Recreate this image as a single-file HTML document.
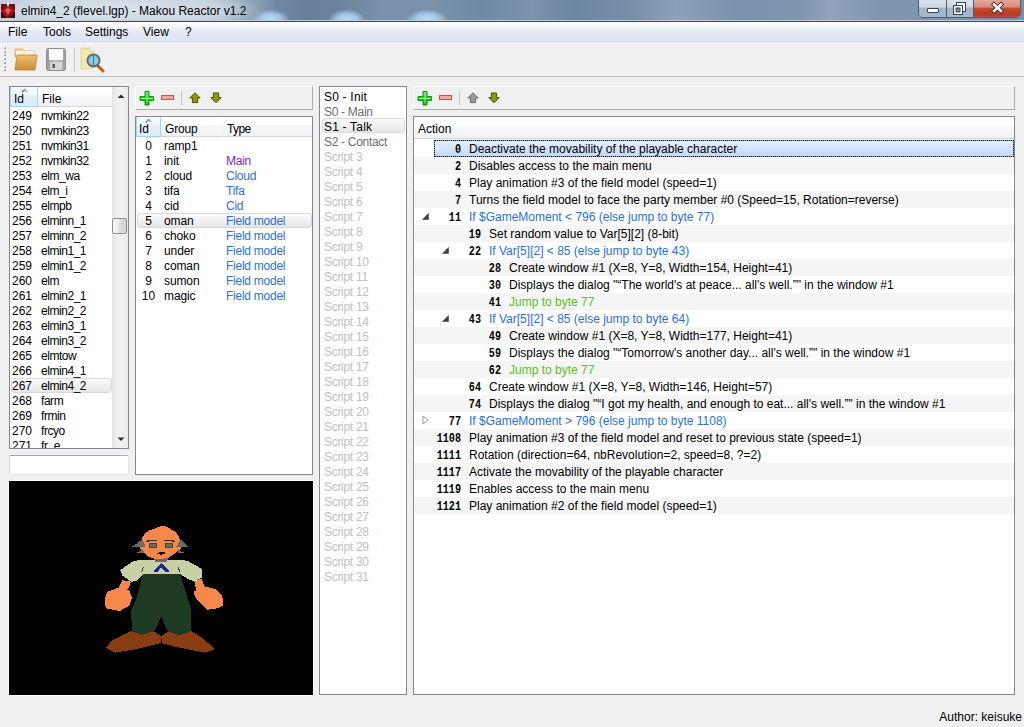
<!DOCTYPE html><html><head><meta charset="utf-8"><style>
*{margin:0;padding:0;box-sizing:border-box}
html,body{width:1024px;height:727px;overflow:hidden;background:#f0f0f0;font-family:"Liberation Sans",sans-serif;font-size:12px;color:#000}
body{position:relative}
.a{position:absolute}
.nw{white-space:nowrap}
#title{left:0;top:0;width:1024px;height:20px;background:linear-gradient(90deg,#c3cfdb 0%,#c6d2dd 10%,#bccad6 21%,#97abbf 24%,#7088a2 27%,#677f99 30%,#6a829c 33%,#7890a9 37%,#7a92ab 42%,#718aa4 47%,#7b93ab 52%,#6d86a0 56%,#7990a9 62%,#8ba1b7 66%,#7a92ab 72%,#7d95ad 78%,#8fa4b9 81%,#7f96ae 86%,#7890a9 100%)}
#titleline{left:0;top:20px;width:1024px;height:2px;border-top:1px solid #c6d0da;background:#3a4550}
#menu{left:0;top:22px;width:1024px;height:22px;background:linear-gradient(#ffffff 0%,#f3f5fa 25%,#e3e7f4 50%,#dde2f2 100%);border-bottom:1px solid #b6bccc}
#menuw{left:0;top:43px;width:1024px;height:1px;background:#fff}
#menu span{position:absolute;top:3px;line-height:14px}
.box{position:absolute;background:#fff;border:1px solid #828790}
.rbox{position:absolute;border-top:1px solid #fff;border-left:1px solid #fff;border-right:1px solid #ababab;border-bottom:1px solid #ababab;background:#f0f0f0}
.hdr{position:absolute;height:20px;background:linear-gradient(#ffffff 0%,#ffffff 42%,#f7f8fa 45%,#f1f2f4 100%);border-bottom:1px solid #d5d5d5}
.hcol{position:absolute;top:0;height:20px;line-height:20px;padding-top:1px}
.hsep{position:absolute;top:0;width:1px;height:20px;background:linear-gradient(#fff,#e3e8ee)}
.sorted{position:absolute;top:0;height:20px;background:linear-gradient(#f4f9fd 0%,#f2f8fc 42%,#e3eff7 45%,#deedf6 100%);border:1px solid #96d9f9;border-top:0}
.r{position:absolute;height:15px;line-height:15px;white-space:nowrap}
.tr{position:absolute;height:17px;line-height:17px;white-space:nowrap}
.num{position:absolute;font-family:"Liberation Mono",monospace;font-weight:bold;font-size:13px;text-align:right;transform:scaleX(0.78);transform-origin:right center}
.sel{position:absolute;border:1px solid #d9d9d9;border-radius:3px;background:linear-gradient(#fafafa,#e6e6e6)}
</style></head><body>
<div id="title" class="a"></div><div id="titleline" class="a"></div>
<svg class="a" style="left:0;top:0" width="1024" height="20"><defs><radialGradient id="blob"><stop offset="0" stop-color="#b8dcfb" stop-opacity="1"/><stop offset="0.55" stop-color="#b0d4f4" stop-opacity="0.8"/><stop offset="1" stop-color="#a8c8e8" stop-opacity="0"/></radialGradient><radialGradient id="glow"><stop offset="0" stop-color="#e4ebf1" stop-opacity="0.7"/><stop offset="0.7" stop-color="#dde5ec" stop-opacity="0.45"/><stop offset="1" stop-color="#d8e0e8" stop-opacity="0"/></radialGradient></defs><ellipse cx="125" cy="10" rx="140" ry="16" fill="url(#glow)"/><ellipse cx="271" cy="20" rx="19" ry="11" fill="url(#blob)"/><ellipse cx="347" cy="20" rx="19" ry="11" fill="url(#blob)"/><ellipse cx="427" cy="20" rx="21" ry="11" fill="url(#blob)"/></svg>
<svg class="a" style="left:0;top:3px" width="17" height="16" viewBox="0 0 17 16"><rect x="1" y="1" width="6.5" height="6.5" fill="#5a1a14"/><rect x="8.5" y="1" width="6.5" height="6.5" fill="#5a1a14"/><rect x="1" y="8.5" width="6.5" height="6.5" fill="#3a0c0a"/><rect x="8.5" y="8.5" width="6.5" height="6.5" fill="#3a0c0a"/><path d="M8 1 L15 8 L8 15.5 L1 8Z" fill="#b80c14"/><path d="M8 9 L13 8 L8 15Z" fill="#900a10"/><path d="M4.5 8 h7 M6 6.5 h4 M8 4.5 v7 M6.5 10 h3" stroke="#e8a090" stroke-width="1" opacity="0.8"/><rect x="7" y="0" width="2" height="3" fill="#f4f4f4"/></svg>
<div class="a nw" style="left:21px;top:4px;line-height:14px;font-size:12px;color:#000">elmin4_2 (flevel.lgp) - Makou Reactor v1.2</div>
<div class="a" style="left:918px;top:-3px;width:103px;height:21px;border:1px solid #4d5d6e;border-radius:0 0 5px 5px;overflow:hidden;"><div class="a" style="left:0;top:0;width:28px;height:20px;background:linear-gradient(#dfe7ef 0%,#ccd8e4 45%,#a2b4c7 50%,#a7b9cc 100%);border-right:1px solid #4d5d6e"></div><div class="a" style="left:28px;top:0;width:27px;height:20px;background:linear-gradient(#dfe7ef 0%,#ccd8e4 45%,#a2b4c7 50%,#a7b9cc 100%);border-right:1px solid #4d5d6e"></div><div class="a" style="left:55px;top:0;width:46px;height:20px;background:linear-gradient(#e8aea2 0%,#d98a7a 45%,#c44a30 52%,#b83a22 85%,#c85a3e 100%)"></div></div>
<div class="a" style="left:927px;top:8px;width:12px;height:5px;background:#fff;border:1px solid #3a4550;border-radius:1px"></div>
<svg class="a" style="left:952px;top:2px" width="15" height="13" viewBox="0 0 15 13"><rect x="4.5" y="0.5" width="9" height="9" fill="#fff" stroke="#3a4550"/><rect x="1.5" y="3.5" width="9" height="9" fill="#fff" stroke="#3a4550"/><rect x="4" y="6" width="4" height="4" fill="#8090a0" stroke="#3a4550" stroke-width="1"/></svg>
<svg class="a" style="left:990px;top:1px" width="15" height="13" viewBox="0 0 15 13"><path d="M4 3.5 L11 10 M11 3.5 L4 10" stroke="#3a2a2a" stroke-width="4.4" stroke-linecap="square"/><path d="M4 3.5 L11 10 M11 3.5 L4 10" stroke="#fff" stroke-width="2.6" stroke-linecap="square"/></svg>
<div id="menu" class="a"><span style="left:8px">File</span><span style="left:43px">Tools</span><span style="left:85px">Settings</span><span style="left:143px">View</span><span style="left:185px">?</span></div><div id="menuw" class="a"></div>
<div class="a" style="left:0;top:75px;width:1024px;height:3px;background:linear-gradient(#f5f5f5 0%,#f5f5f5 33%,#b8b8b8 33%,#b8b8b8 66%,#f5f5f5 66%)"></div>
<div class="a" style="left:4px;top:47px;width:2px;height:2px;background:linear-gradient(135deg,#fff 0%,#fff 40%,#a0a0a0 40%)"></div>
<div class="a" style="left:4px;top:51px;width:2px;height:2px;background:linear-gradient(135deg,#fff 0%,#fff 40%,#a0a0a0 40%)"></div>
<div class="a" style="left:4px;top:54px;width:2px;height:2px;background:linear-gradient(135deg,#fff 0%,#fff 40%,#a0a0a0 40%)"></div>
<div class="a" style="left:4px;top:58px;width:2px;height:2px;background:linear-gradient(135deg,#fff 0%,#fff 40%,#a0a0a0 40%)"></div>
<div class="a" style="left:4px;top:62px;width:2px;height:2px;background:linear-gradient(135deg,#fff 0%,#fff 40%,#a0a0a0 40%)"></div>
<div class="a" style="left:4px;top:66px;width:2px;height:2px;background:linear-gradient(135deg,#fff 0%,#fff 40%,#a0a0a0 40%)"></div>
<div class="a" style="left:4px;top:69px;width:2px;height:2px;background:linear-gradient(135deg,#fff 0%,#fff 40%,#a0a0a0 40%)"></div>
<svg class="a" style="left:13px;top:47px" width="26" height="25" viewBox="0 0 26 25"><defs><linearGradient id="fb" x1="0" y1="0" x2="0" y2="1"><stop offset="0" stop-color="#f6dba6"/><stop offset="1" stop-color="#e8b86a"/></linearGradient><linearGradient id="ff" x1="0" y1="0" x2="0" y2="1"><stop offset="0" stop-color="#efc070"/><stop offset="1" stop-color="#c98a34"/></linearGradient></defs><path d="M2 2 h8 l2 2 h9 v6 h-19z" fill="url(#fb)" stroke="#d6a460" stroke-width="0.8"/><path d="M3 4 h18 v6 h-18z" fill="#fbf3e2"/><path d="M4 8 h20 l-2 15 h-20 z" fill="url(#ff)" stroke="#c08030" stroke-width="0.8"/></svg>
<svg class="a" style="left:45px;top:47px" width="23" height="25" viewBox="0 0 23 25"><defs><linearGradient id="fl" x1="0" y1="0" x2="1" y2="0"><stop offset="0" stop-color="#9c9c9c"/><stop offset="0.5" stop-color="#bababa"/><stop offset="1" stop-color="#a4a4a4"/></linearGradient></defs><rect x="1.5" y="1.5" width="19" height="22" rx="2" fill="url(#fl)" stroke="#8c8c8c"/><rect x="4" y="2" width="14" height="11" fill="#fbfbfb"/><rect x="5" y="15" width="12" height="8" fill="#d6d6d6"/><rect x="7.5" y="17" width="2.5" height="4" fill="#5a5a5a"/></svg>
<div class="a" style="left:74px;top:48px;width:1px;height:24px;background:#c8c8c8"></div>
<svg class="a" style="left:80px;top:47px" width="26" height="26" viewBox="0 0 26 26"><path d="M1 1 h9 l3 3 v17 l-12 1z" fill="#f3e9b0" stroke="#d8cc90" stroke-width="0.8"/><path d="M10 1 v3 h3" fill="#fff" stroke="#c8c8c8" stroke-width="0.8"/><path d="M17 18 L23 24" stroke="#c06018" stroke-width="3" stroke-linecap="round"/><circle cx="13.5" cy="13.5" r="6" fill="#7fd0e8" stroke="#6a6a6a" stroke-width="2"/><path d="M13.5 8 v11" stroke="#3a7a98" stroke-width="1"/></svg>
<div class="box" style="left:9px;top:86px;width:120px;height:363px;overflow:hidden">
<div class="hdr" style="left:0;top:0;width:102px"></div>
<div class="sorted" style="left:0;top:0;width:28px"></div>
<svg class="a" style="left:11px;top:1px" width="8" height="5" viewBox="0 0 8 5"><defs><linearGradient id="sa" x1="0" y1="0" x2="1" y2="0"><stop offset="0" stop-color="#2f5f80"/><stop offset="1" stop-color="#a8d4ec"/></linearGradient></defs><path d="M0 4.6 L3.6 0.6 L7.4 4.6 L5.6 4.6 L3.6 2.4 L1.8 4.6Z" fill="url(#sa)"/></svg>
<div class="hsep" style="left:102px"></div>
<div class="a nw" style="left:4px;top:5px;line-height:14px">Id</div>
<div class="a nw" style="left:32px;top:5px;line-height:14px">File</div>
<div class="a" style="left:102px;top:0;width:17px;height:361px;background:linear-gradient(90deg,#e3e3e3,#f0f0f0 30%,#f0f0f0 70%,#e8e8e8)"></div>
<svg class="a" style="left:107px;top:7px" width="8" height="5" viewBox="0 0 8 5"><path d="M0.5 4 L4 0.5 L7.5 4z" fill="#2a2a2a"/></svg>
<svg class="a" style="left:107px;top:350px" width="8" height="5" viewBox="0 0 8 5"><path d="M0.5 0.5 L4 4 L7.5 0.5z" fill="#2a2a2a"/></svg>
<div class="a" style="left:102px;top:131px;width:15px;height:16px;border:1px solid #8e8f8f;border-radius:2px;background:linear-gradient(90deg,#f7f7f7 0%,#ececec 45%,#dcdcdf 50%,#d6d6da 100%)"></div>
<div class="r" style="left:2px;top:22px">249</div>
<div class="r" style="left:31px;top:22px;letter-spacing:-0.45px">nvmkin22</div>
<div class="r" style="left:2px;top:37px">250</div>
<div class="r" style="left:31px;top:37px;letter-spacing:-0.45px">nvmkin23</div>
<div class="r" style="left:2px;top:52px">251</div>
<div class="r" style="left:31px;top:52px;letter-spacing:-0.45px">nvmkin31</div>
<div class="r" style="left:2px;top:67px">252</div>
<div class="r" style="left:31px;top:67px;letter-spacing:-0.45px">nvmkin32</div>
<div class="r" style="left:2px;top:82px">253</div>
<div class="r" style="left:31px;top:82px;letter-spacing:-0.45px">elm_wa</div>
<div class="r" style="left:2px;top:97px">254</div>
<div class="r" style="left:31px;top:97px;letter-spacing:-0.45px">elm_i</div>
<div class="r" style="left:2px;top:112px">255</div>
<div class="r" style="left:31px;top:112px;letter-spacing:-0.45px">elmpb</div>
<div class="r" style="left:2px;top:127px">256</div>
<div class="r" style="left:31px;top:127px;letter-spacing:-0.45px">elminn_1</div>
<div class="r" style="left:2px;top:142px">257</div>
<div class="r" style="left:31px;top:142px;letter-spacing:-0.45px">elminn_2</div>
<div class="r" style="left:2px;top:157px">258</div>
<div class="r" style="left:31px;top:157px;letter-spacing:-0.45px">elmin1_1</div>
<div class="r" style="left:2px;top:172px">259</div>
<div class="r" style="left:31px;top:172px;letter-spacing:-0.45px">elmin1_2</div>
<div class="r" style="left:2px;top:187px">260</div>
<div class="r" style="left:31px;top:187px;letter-spacing:-0.45px">elm</div>
<div class="r" style="left:2px;top:202px">261</div>
<div class="r" style="left:31px;top:202px;letter-spacing:-0.45px">elmin2_1</div>
<div class="r" style="left:2px;top:217px">262</div>
<div class="r" style="left:31px;top:217px;letter-spacing:-0.45px">elmin2_2</div>
<div class="r" style="left:2px;top:232px">263</div>
<div class="r" style="left:31px;top:232px;letter-spacing:-0.45px">elmin3_1</div>
<div class="r" style="left:2px;top:247px">264</div>
<div class="r" style="left:31px;top:247px;letter-spacing:-0.45px">elmin3_2</div>
<div class="r" style="left:2px;top:262px">265</div>
<div class="r" style="left:31px;top:262px;letter-spacing:-0.45px">elmtow</div>
<div class="r" style="left:2px;top:277px">266</div>
<div class="r" style="left:31px;top:277px;letter-spacing:-0.45px">elmin4_1</div>
<div class="sel" style="left:1px;top:291px;width:101px;height:15px"></div>
<div class="r" style="left:2px;top:292px">267</div>
<div class="r" style="left:31px;top:292px;letter-spacing:-0.45px">elmin4_2</div>
<div class="r" style="left:2px;top:307px">268</div>
<div class="r" style="left:31px;top:307px;letter-spacing:-0.45px">farm</div>
<div class="r" style="left:2px;top:322px">269</div>
<div class="r" style="left:31px;top:322px;letter-spacing:-0.45px">frmin</div>
<div class="r" style="left:2px;top:337px">270</div>
<div class="r" style="left:31px;top:337px;letter-spacing:-0.45px">frcyo</div>
<div class="r" style="left:2px;top:352px">271</div>
<div class="r" style="left:31px;top:352px;letter-spacing:-0.45px">fr_e</div>
</div>
<div class="a" style="left:9px;top:455px;width:120px;height:20px;background:#fff;border:1px solid #e0e4ea;border-left-color:#dbdfe6;border-top-color:#abadb3;border-radius:2px"></div>
<div class="a" style="left:8px;top:480px;width:306px;height:216px;background:#fff"></div>
<div class="a" style="left:9px;top:481px;width:304px;height:214px;background:#000;overflow:hidden">
<svg class="a" style="left:0;top:0" width="304" height="214" viewBox="9 481 304 214" shape-rendering="crispEdges"><path d="M105.9 647.9 L111.4 641 L131.9 630.8 L155.2 632.1 L161.3 636.2 L160.6 643.1 L136 649.2 L115.5 652.6Z" fill="#8a3c12"/><path d="M161.3 636.2 L168.8 631.4 L190.7 630.8 L203 638.3 L214.6 649.2 L204.4 652.6 L177 647.2 L162 643.1Z" fill="#8a3c12"/><path d="M142.2 574 L179.8 574 L183.9 586.4 L191.4 610.3 L190.7 631.4 L179.8 635.3 L167.5 631.4 L161.3 616.4 L154.5 631.4 L141.5 634.9 L131.9 631.4 L131.2 610.3 L136 600 L140.1 585Z" fill="#1f3a22"/><path d="M122.3 580.3 L131.2 581.7 L128.5 588.5 L118.2 588.5Z" fill="#f5884a"/><path d="M107.3 591.9 L118.2 587.8 L129.2 589.9 L131.9 597.4 L129.2 605.6 L119.6 611.1 L105.9 608.3 L104.6 600.1Z" fill="#f5884a"/><path d="M194.8 580.3 L201.6 578.9 L204.4 586.4 L196 592Z" fill="#f5884a"/><path d="M193.4 591.9 L204.4 586.4 L215.3 589.2 L222.2 596 L223.5 605.6 L215.3 609 L207.1 609.7 L196.2 598.8Z" fill="#f5884a"/><path d="M120.3 570 L133.3 561.2 L142.9 559.5 L179.8 559.5 L188 561.2 L201.6 568.7 L201.6 577.6 L194.8 581.7 L189.3 579.6 L180 574 L143 574 L136 581 L131.2 581.7 L122.3 575.5Z" fill="#c8d1a6"/><path d="M143.5 567 L141.5 572 M178 567 L180 572" stroke="#2a4a28" stroke-width="1"/><path d="M161.3 563.2 L153.1 571.4 L157.2 572.1 L161.3 567.3 L165.4 572.1 L169.5 571.4Z" fill="#1a2a8a"/><path d="M153.2 556 L160.8 559 L160.8 562.5 L155 561.5Z" fill="#6e6868"/><path d="M169 556 L160.8 559 L160.8 562.5 L167 561.5Z" fill="#6e6868"/><path d="M160.8 526.2 L155.3 528.3 L149.8 530.3 L145 533 L142.2 537.9 L141.5 542 L140.1 548.9 L144.3 552.3 L148.4 556.5 L153.9 558.5 L160.8 559.2 L169 557.5 L174.5 553.7 L178.6 550.3 L181.7 548.2 L180 542 L179.3 537.2 L175.9 532.4 L169.7 528.3 L164.9 526.2Z" fill="#f5884a"/><path d="M132.5 546.5 L142.2 539.5 L145.5 546.5Z" fill="#6e6868"/><path d="M136.5 553 L143 549.2 L144 553Z" fill="#6e6868"/><path d="M176.5 546.5 L180.5 539.5 L188.5 546.5Z" fill="#6e6868"/><path d="M177.5 550 L185.5 553 L178.5 553Z" fill="#6e6868"/><path d="M145.6 541.5 L148 540 L157.3 539.8 L157.3 541 L148 541.6Z" fill="#203040"/><path d="M164.2 539.8 L173 540 L175.9 542 L173 541.6 L164.2 541Z" fill="#203040"/><rect x="149.1" y="543.4" width="7.9" height="4.1" fill="#3a4a3a"/><rect x="150" y="544.3" width="6" height="2.3" fill="#62705c"/><rect x="165.2" y="543.4" width="7.3" height="4.1" fill="#3a4a3a"/><rect x="166" y="544.3" width="5.5" height="2.3" fill="#62705c"/><path d="M157 553 L160 552.3 L165 552.5 L164.9 554 L161 554.7 L157.5 554Z" fill="#1a1010"/></svg>
</div>
<div class="rbox" style="left:135px;top:86px;width:178px;height:24px"></div>
<svg class="a" style="left:139px;top:90px" width="16" height="16" viewBox="0 0 16 16"><defs><linearGradient id="pg139" x1="0" y1="0" x2="0" y2="1"><stop offset="0" stop-color="#5fe85a"/><stop offset="0.5" stop-color="#20cc20"/><stop offset="1" stop-color="#08a008"/></linearGradient></defs><path d="M6 1.5 h4 v5 h4.5 v4 h-4.5 v4.5 h-4 v-4.5 h-5 v-4 h5z" fill="url(#pg139)" stroke="#0a9a0a" stroke-width="1"/><path d="M8 2.5 v11 M2 8.5 h12" stroke="#c8f8c0" stroke-width="1" opacity="0.75"/></svg><svg class="a" style="left:161px;top:95px" width="13" height="5" viewBox="0 0 13 5"><rect x="0.5" y="0.5" width="12" height="4" fill="#f4a8a8" stroke="#d44c4c" stroke-width="1"/></svg><div class="a" style="left:181px;top:91px;width:1px;height:14px;background:#c8c8c8"></div><svg class="a" style="left:189px;top:92px" width="13" height="12" viewBox="0 0 13 12"><path d="M6 0.8 L11.2 6 L8.6 6 L8.6 10.6 L3.4 10.6 L3.4 6 L0.8 6Z" fill="#8c9410" stroke="#4a5000" stroke-width="1" stroke-linejoin="round"/></svg><svg class="a" style="left:210px;top:92px" width="13" height="12" viewBox="0 0 13 12"><path d="M3.4 1 L8.6 1 L8.6 5.6 L11.2 5.6 L6 10.8 L0.8 5.6 L3.4 5.6Z" fill="#8c9a10" stroke="#4a5000" stroke-width="1" stroke-linejoin="round"/></svg>
<div class="box" style="left:135px;top:116px;width:178px;height:359px;overflow:hidden">
<div class="hdr" style="left:0;top:0;width:176px"></div>
<div class="sorted" style="left:0;top:0;width:25px"></div>
<svg class="a" style="left:9px;top:1px" width="8" height="5" viewBox="0 0 8 5"><path d="M0 4.6 L3.6 0.6 L7.4 4.6 L5.6 4.6 L3.6 2.4 L1.8 4.6Z" fill="url(#sa)"/></svg>
<div class="hsep" style="left:86px"></div>
<div class="a nw" style="left:3px;top:5px;line-height:14px">Id</div>
<div class="a nw" style="left:29px;top:5px;line-height:14px;letter-spacing:-0.2px">Group</div>
<div class="a nw" style="left:91px;top:5px;line-height:14px;letter-spacing:-0.6px">Type</div>
<div class="r" style="left:0;top:22px;width:25px;text-align:center">0</div>
<div class="r" style="left:28px;top:22px;letter-spacing:-0.1px">ramp1</div>
<div class="r" style="left:90px;top:22px;color:#2f6fd0;letter-spacing:-0.25px"></div>
<div class="r" style="left:0;top:37px;width:25px;text-align:center">1</div>
<div class="r" style="left:28px;top:37px;letter-spacing:-0.1px">init</div>
<div class="r" style="left:90px;top:37px;color:#7c1fd0;letter-spacing:-0.25px">Main</div>
<div class="r" style="left:0;top:52px;width:25px;text-align:center">2</div>
<div class="r" style="left:28px;top:52px;letter-spacing:-0.1px">cloud</div>
<div class="r" style="left:90px;top:52px;color:#2f6fd0;letter-spacing:-0.25px">Cloud</div>
<div class="r" style="left:0;top:67px;width:25px;text-align:center">3</div>
<div class="r" style="left:28px;top:67px;letter-spacing:-0.1px">tifa</div>
<div class="r" style="left:90px;top:67px;color:#2f6fd0;letter-spacing:-0.25px">Tifa</div>
<div class="r" style="left:0;top:82px;width:25px;text-align:center">4</div>
<div class="r" style="left:28px;top:82px;letter-spacing:-0.1px">cid</div>
<div class="r" style="left:90px;top:82px;color:#2f6fd0;letter-spacing:-0.25px">Cid</div>
<div class="sel" style="left:1px;top:96px;width:175px;height:15px"></div>
<div class="r" style="left:0;top:97px;width:25px;text-align:center">5</div>
<div class="r" style="left:28px;top:97px;letter-spacing:-0.1px">oman</div>
<div class="r" style="left:90px;top:97px;color:#2f6fd0;letter-spacing:-0.25px">Field model</div>
<div class="r" style="left:0;top:112px;width:25px;text-align:center">6</div>
<div class="r" style="left:28px;top:112px;letter-spacing:-0.1px">choko</div>
<div class="r" style="left:90px;top:112px;color:#2f6fd0;letter-spacing:-0.25px">Field model</div>
<div class="r" style="left:0;top:127px;width:25px;text-align:center">7</div>
<div class="r" style="left:28px;top:127px;letter-spacing:-0.1px">under</div>
<div class="r" style="left:90px;top:127px;color:#2f6fd0;letter-spacing:-0.25px">Field model</div>
<div class="r" style="left:0;top:142px;width:25px;text-align:center">8</div>
<div class="r" style="left:28px;top:142px;letter-spacing:-0.1px">coman</div>
<div class="r" style="left:90px;top:142px;color:#2f6fd0;letter-spacing:-0.25px">Field model</div>
<div class="r" style="left:0;top:157px;width:25px;text-align:center">9</div>
<div class="r" style="left:28px;top:157px;letter-spacing:-0.1px">sumon</div>
<div class="r" style="left:90px;top:157px;color:#2f6fd0;letter-spacing:-0.25px">Field model</div>
<div class="r" style="left:0;top:172px;width:25px;text-align:center">10</div>
<div class="r" style="left:28px;top:172px;letter-spacing:-0.1px">magic</div>
<div class="r" style="left:90px;top:172px;color:#2f6fd0;letter-spacing:-0.25px">Field model</div>
</div>
<div class="box" style="left:319px;top:86px;width:88px;height:609px;overflow:hidden">
<div class="r" style="left:4px;top:3px;color:#000;letter-spacing:0.2px">S0 - Init</div>
<div class="r" style="left:4px;top:18px;color:#6d6d6d;letter-spacing:-0.3px">S0 - Main</div>
<div class="sel" style="left:2px;top:31px;width:83px;height:15px"></div>
<div class="r" style="left:4px;top:33px;color:#000;letter-spacing:0.2px">S1 - Talk</div>
<div class="r" style="left:4px;top:48px;color:#6d6d6d;letter-spacing:-0.3px">S2 - Contact</div>
<div class="r" style="left:4px;top:63px;color:#c0c0c0;letter-spacing:-0.3px">Script 3</div>
<div class="r" style="left:4px;top:78px;color:#c0c0c0;letter-spacing:-0.3px">Script 4</div>
<div class="r" style="left:4px;top:93px;color:#c0c0c0;letter-spacing:-0.3px">Script 5</div>
<div class="r" style="left:4px;top:108px;color:#c0c0c0;letter-spacing:-0.3px">Script 6</div>
<div class="r" style="left:4px;top:123px;color:#c0c0c0;letter-spacing:-0.3px">Script 7</div>
<div class="r" style="left:4px;top:138px;color:#c0c0c0;letter-spacing:-0.3px">Script 8</div>
<div class="r" style="left:4px;top:153px;color:#c0c0c0;letter-spacing:-0.3px">Script 9</div>
<div class="r" style="left:4px;top:168px;color:#c0c0c0;letter-spacing:-0.3px">Script 10</div>
<div class="r" style="left:4px;top:183px;color:#c0c0c0;letter-spacing:-0.3px">Script 11</div>
<div class="r" style="left:4px;top:198px;color:#c0c0c0;letter-spacing:-0.3px">Script 12</div>
<div class="r" style="left:4px;top:213px;color:#c0c0c0;letter-spacing:-0.3px">Script 13</div>
<div class="r" style="left:4px;top:228px;color:#c0c0c0;letter-spacing:-0.3px">Script 14</div>
<div class="r" style="left:4px;top:243px;color:#c0c0c0;letter-spacing:-0.3px">Script 15</div>
<div class="r" style="left:4px;top:258px;color:#c0c0c0;letter-spacing:-0.3px">Script 16</div>
<div class="r" style="left:4px;top:273px;color:#c0c0c0;letter-spacing:-0.3px">Script 17</div>
<div class="r" style="left:4px;top:288px;color:#c0c0c0;letter-spacing:-0.3px">Script 18</div>
<div class="r" style="left:4px;top:303px;color:#c0c0c0;letter-spacing:-0.3px">Script 19</div>
<div class="r" style="left:4px;top:318px;color:#c0c0c0;letter-spacing:-0.3px">Script 20</div>
<div class="r" style="left:4px;top:333px;color:#c0c0c0;letter-spacing:-0.3px">Script 21</div>
<div class="r" style="left:4px;top:348px;color:#c0c0c0;letter-spacing:-0.3px">Script 22</div>
<div class="r" style="left:4px;top:363px;color:#c0c0c0;letter-spacing:-0.3px">Script 23</div>
<div class="r" style="left:4px;top:378px;color:#c0c0c0;letter-spacing:-0.3px">Script 24</div>
<div class="r" style="left:4px;top:393px;color:#c0c0c0;letter-spacing:-0.3px">Script 25</div>
<div class="r" style="left:4px;top:408px;color:#c0c0c0;letter-spacing:-0.3px">Script 26</div>
<div class="r" style="left:4px;top:423px;color:#c0c0c0;letter-spacing:-0.3px">Script 27</div>
<div class="r" style="left:4px;top:438px;color:#c0c0c0;letter-spacing:-0.3px">Script 28</div>
<div class="r" style="left:4px;top:453px;color:#c0c0c0;letter-spacing:-0.3px">Script 29</div>
<div class="r" style="left:4px;top:468px;color:#c0c0c0;letter-spacing:-0.3px">Script 30</div>
<div class="r" style="left:4px;top:483px;color:#c0c0c0;letter-spacing:-0.3px">Script 31</div>
</div>
<div class="rbox" style="left:413px;top:86px;width:602px;height:24px"></div>
<svg class="a" style="left:417px;top:90px" width="16" height="16" viewBox="0 0 16 16"><defs><linearGradient id="pg417" x1="0" y1="0" x2="0" y2="1"><stop offset="0" stop-color="#5fe85a"/><stop offset="0.5" stop-color="#20cc20"/><stop offset="1" stop-color="#08a008"/></linearGradient></defs><path d="M6 1.5 h4 v5 h4.5 v4 h-4.5 v4.5 h-4 v-4.5 h-5 v-4 h5z" fill="url(#pg417)" stroke="#0a9a0a" stroke-width="1"/><path d="M8 2.5 v11 M2 8.5 h12" stroke="#c8f8c0" stroke-width="1" opacity="0.75"/></svg><svg class="a" style="left:439px;top:95px" width="13" height="5" viewBox="0 0 13 5"><rect x="0.5" y="0.5" width="12" height="4" fill="#f4a8a8" stroke="#d44c4c" stroke-width="1"/></svg><div class="a" style="left:459px;top:91px;width:1px;height:14px;background:#c8c8c8"></div><svg class="a" style="left:467px;top:92px" width="13" height="12" viewBox="0 0 13 12"><path d="M6 0.8 L11.2 6 L8.6 6 L8.6 10.6 L3.4 10.6 L3.4 6 L0.8 6Z" fill="#9a9a9a" stroke="#6a6a6a" stroke-width="1" stroke-linejoin="round"/></svg><svg class="a" style="left:488px;top:92px" width="13" height="12" viewBox="0 0 13 12"><path d="M3.4 1 L8.6 1 L8.6 5.6 L11.2 5.6 L6 10.8 L0.8 5.6 L3.4 5.6Z" fill="#8c9a10" stroke="#4a5000" stroke-width="1" stroke-linejoin="round"/></svg>
<div class="box" style="left:413px;top:116px;width:602px;height:579px;overflow:hidden">
<div class="hdr" style="left:0;top:0;width:600px;height:22px"></div>
<div class="a nw" style="left:4px;top:5px;line-height:14px">Action</div>
<div class="a" style="left:20px;top:23px;width:580px;height:17px;border:1px solid #7da2ce;border-radius:2px;background:linear-gradient(#e4eefd,#c4dafc)"></div>
<div class="a" style="left:20px;top:23px;width:580px;height:17px;border:1px dotted #000"></div>
<div class="tr num" style="left:7px;top:24px;width:40px;color:#000">0</div>
<div class="tr" style="left:55px;top:24px;color:#000;letter-spacing:0px">Deactivate the movability of the playable character</div>
<div class="a" style="left:0;top:40px;width:600px;height:17px;background:#f5f5f5"></div>
<div class="tr num" style="left:7px;top:41px;width:40px;color:#000">2</div>
<div class="tr" style="left:55px;top:41px;color:#000;letter-spacing:0px">Disables access to the main menu</div>
<div class="tr num" style="left:7px;top:58px;width:40px;color:#000">4</div>
<div class="tr" style="left:55px;top:58px;color:#000;letter-spacing:0px">Play animation #3 of the field model (speed=1)</div>
<div class="a" style="left:0;top:74px;width:600px;height:17px;background:#f5f5f5"></div>
<div class="tr num" style="left:7px;top:75px;width:40px;color:#000">7</div>
<div class="tr" style="left:55px;top:75px;color:#000;letter-spacing:0px">Turns the field model to face the party member #0 (Speed=15, Rotation=reverse)</div>
<svg class="a" style="left:8px;top:96px" width="7" height="7" viewBox="0 0 7 7"><path d="M6.5 0.5 L6.5 6.5 L0.5 6.5Z" fill="#404040" stroke="#5a5a5a" stroke-width="0.8"/></svg>
<div class="tr num" style="left:7px;top:92px;width:40px;color:#000">11</div>
<div class="tr" style="left:55px;top:92px;color:#2b6fd4;letter-spacing:0px">If $GameMoment &lt; 796 (else jump to byte 77)</div>
<div class="a" style="left:0;top:108px;width:600px;height:17px;background:#f5f5f5"></div>
<div class="tr num" style="left:27px;top:109px;width:40px;color:#000">19</div>
<div class="tr" style="left:75px;top:109px;color:#000;letter-spacing:0px">Set random value to Var[5][2] (8-bit)</div>
<svg class="a" style="left:28px;top:130px" width="7" height="7" viewBox="0 0 7 7"><path d="M6.5 0.5 L6.5 6.5 L0.5 6.5Z" fill="#404040" stroke="#5a5a5a" stroke-width="0.8"/></svg>
<div class="tr num" style="left:27px;top:126px;width:40px;color:#000">22</div>
<div class="tr" style="left:75px;top:126px;color:#2b6fd4;letter-spacing:0px">If Var[5][2] &lt; 85 (else jump to byte 43)</div>
<div class="a" style="left:0;top:142px;width:600px;height:17px;background:#f5f5f5"></div>
<div class="tr num" style="left:47px;top:143px;width:40px;color:#000">28</div>
<div class="tr" style="left:95px;top:143px;color:#000;letter-spacing:0px">Create window #1 (X=8, Y=8, Width=154, Height=41)</div>
<div class="tr num" style="left:47px;top:160px;width:40px;color:#000">30</div>
<div class="tr" style="left:95px;top:160px;color:#000;letter-spacing:0px">Displays the dialog &quot;“The world&#x27;s at peace... all&#x27;s well.”&quot; in the window #1</div>
<div class="a" style="left:0;top:176px;width:600px;height:17px;background:#f5f5f5"></div>
<div class="tr num" style="left:47px;top:177px;width:40px;color:#000">41</div>
<div class="tr" style="left:95px;top:177px;color:#5cbf1c;letter-spacing:0px">Jump to byte 77</div>
<svg class="a" style="left:28px;top:198px" width="7" height="7" viewBox="0 0 7 7"><path d="M6.5 0.5 L6.5 6.5 L0.5 6.5Z" fill="#404040" stroke="#5a5a5a" stroke-width="0.8"/></svg>
<div class="tr num" style="left:27px;top:194px;width:40px;color:#000">43</div>
<div class="tr" style="left:75px;top:194px;color:#2b6fd4;letter-spacing:0px">If Var[5][2] &lt; 85 (else jump to byte 64)</div>
<div class="a" style="left:0;top:210px;width:600px;height:17px;background:#f5f5f5"></div>
<div class="tr num" style="left:47px;top:211px;width:40px;color:#000">49</div>
<div class="tr" style="left:95px;top:211px;color:#000;letter-spacing:0px">Create window #1 (X=8, Y=8, Width=177, Height=41)</div>
<div class="tr num" style="left:47px;top:228px;width:40px;color:#000">59</div>
<div class="tr" style="left:95px;top:228px;color:#000;letter-spacing:0px">Displays the dialog &quot;“Tomorrow&#x27;s another day... all&#x27;s well.”&quot; in the window #1</div>
<div class="a" style="left:0;top:244px;width:600px;height:17px;background:#f5f5f5"></div>
<div class="tr num" style="left:47px;top:245px;width:40px;color:#000">62</div>
<div class="tr" style="left:95px;top:245px;color:#5cbf1c;letter-spacing:0px">Jump to byte 77</div>
<div class="tr num" style="left:27px;top:262px;width:40px;color:#000">64</div>
<div class="tr" style="left:75px;top:262px;color:#000;letter-spacing:0px">Create window #1 (X=8, Y=8, Width=146, Height=57)</div>
<div class="a" style="left:0;top:278px;width:600px;height:17px;background:#f5f5f5"></div>
<div class="tr num" style="left:27px;top:279px;width:40px;color:#000">74</div>
<div class="tr" style="left:75px;top:279px;color:#000;letter-spacing:0px">Displays the dialog &quot;“I got my health, and enough to eat... all&#x27;s well.”&quot; in the window #1</div>
<svg class="a" style="left:8px;top:298px" width="7" height="10" viewBox="0 0 7 10"><path d="M1 1 L6 5 L1 9Z" fill="none" stroke="#9a9a9a" stroke-width="1"/></svg>
<div class="tr num" style="left:7px;top:296px;width:40px;color:#000">77</div>
<div class="tr" style="left:55px;top:296px;color:#2b6fd4;letter-spacing:0px">If $GameMoment &gt; 796 (else jump to byte 1108)</div>
<div class="a" style="left:0;top:312px;width:600px;height:17px;background:#f5f5f5"></div>
<div class="tr num" style="left:7px;top:313px;width:40px;color:#000">1108</div>
<div class="tr" style="left:55px;top:313px;color:#000;letter-spacing:0px">Play animation #3 of the field model and reset to previous state (speed=1)</div>
<div class="tr num" style="left:7px;top:330px;width:40px;color:#000">1111</div>
<div class="tr" style="left:55px;top:330px;color:#000;letter-spacing:0px">Rotation (direction=64, nbRevolution=2, speed=8, ?=2)</div>
<div class="a" style="left:0;top:346px;width:600px;height:17px;background:#f5f5f5"></div>
<div class="tr num" style="left:7px;top:347px;width:40px;color:#000">1117</div>
<div class="tr" style="left:55px;top:347px;color:#000;letter-spacing:0px">Activate the movability of the playable character</div>
<div class="tr num" style="left:7px;top:364px;width:40px;color:#000">1119</div>
<div class="tr" style="left:55px;top:364px;color:#000;letter-spacing:0px">Enables access to the main menu</div>
<div class="a" style="left:0;top:380px;width:600px;height:17px;background:#f5f5f5"></div>
<div class="tr num" style="left:7px;top:381px;width:40px;color:#000">1121</div>
<div class="tr" style="left:55px;top:381px;color:#000;letter-spacing:0px">Play animation #2 of the field model (speed=1)</div>
</div>
<div class="a nw" style="right:2px;top:710px;line-height:14px">Author: keisuke</div>
</body></html>
